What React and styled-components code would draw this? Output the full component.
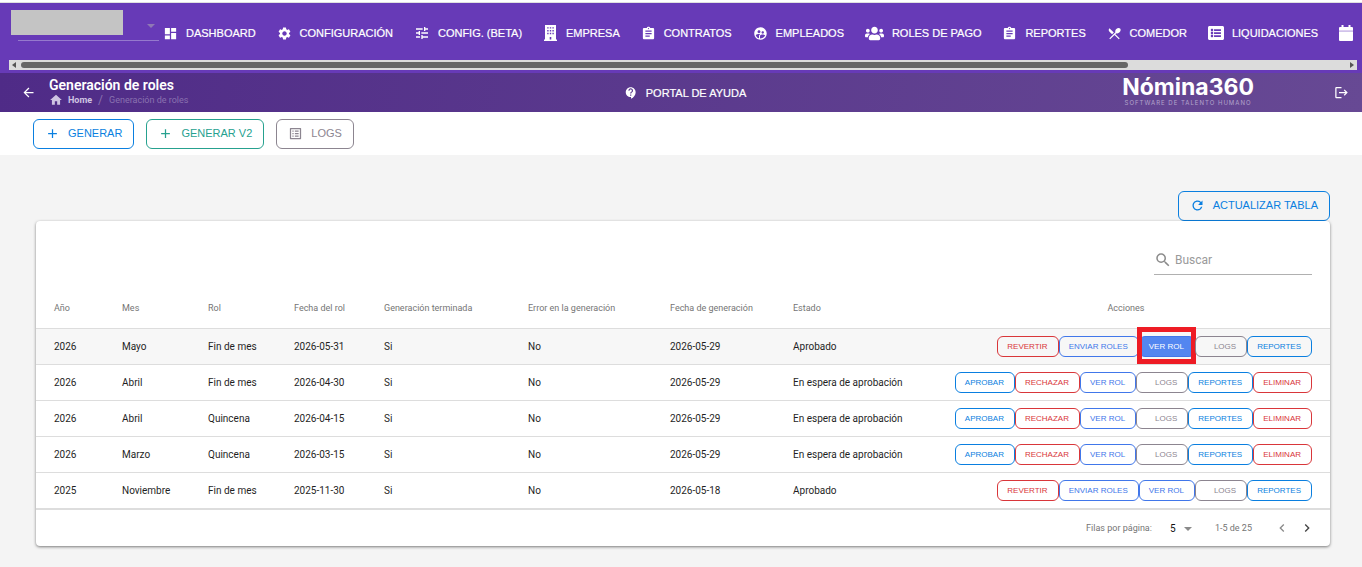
import styled, { createGlobalStyle } from "styled-components";
import {
  MdDashboard,
  MdSettings,
  MdTune,
  MdAssignment,
  MdSupervisedUserCircle,
  MdRestaurantMenu,
  MdContactSupport,
  MdLogout,
  MdArrowBack,
  MdHome,
  MdAdd,
  MdOutlineListAlt,
  MdRefresh,
  MdSearch,
  MdChevronLeft,
  MdChevronRight,
} from "react-icons/md";
import { FaUsers, FaListAlt } from "react-icons/fa";

const GlobalStyle = createGlobalStyle`
  * {
    box-sizing: border-box;
  }
  body {
    margin: 0;
    background: #f4f4f4;
    font-family: Roboto, "Liberation Sans", sans-serif;
  }
  button, input, select {
    font-family: inherit;
    margin: 0;
  }
`;

const Page = styled.div`
  border-top: 2px solid #fff;
  overflow: hidden;
`;

const TopBar = styled.header`
  height: 71px;
  background: #673ab7;
  border-top: 1px solid #e0e0e0;
  display: flex;
  flex-direction: column;
  justify-content: space-between;
  padding: 0 5px 3px 9px;
`;

const TopRow = styled.div`
  display: flex;
  align-items: flex-start;
  gap: 4px;
  padding-left: 9px;
  height: 57px;
`;

const Company = styled.div`
  position: relative;
  width: 141px;
  height: 38px;
  flex-shrink: 0;
  border-bottom: 1px solid #9579cd;
  &:before {
    content: "";
    position: absolute;
    left: -7px;
    top: 7px;
    width: 112px;
    height: 25px;
    background: #c4c4c4;
  }
  &:after {
    content: "";
    position: absolute;
    right: 4px;
    top: 21px;
    border: 4px solid transparent;
    border-top-color: #8f78b5;
    border-bottom: 0;
  }
`;

const CompanySelect = styled.select`
  appearance: none;
  width: 100%;
  height: 37px;
  border: 0;
  background: transparent;
  color: #fff;
`;

const Menu = styled.nav`
  flex: 1;
  display: flex;
  justify-content: space-between;
  align-items: center;
  height: 60px;
  padding-right: 4px;
`;

const MenuLink = styled.a`
  display: flex;
  align-items: center;
  gap: 8px;
  color: #fff;
  font-family: "Liberation Sans", Arial, sans-serif;
  font-size: 11px;
  white-space: nowrap;
  text-decoration: none;
  -webkit-text-stroke: 0.2px #fff;
`;

const ScrollTrack = styled.div`
  display: flex;
  align-items: center;
  justify-content: space-between;
  height: 10px;
  padding: 0 3px;
  background: #dcdcdc;
`;

const ScrollArrow = styled.span`
  border: 3px solid transparent;
  border-left: ${(props) => (props.$right ? "4px solid #555" : "0")};
  border-right: ${(props) => (props.$right ? "0" : "4px solid #555")};
`;

const ScrollThumb = styled.span`
  width: 82.5%;
  height: 6px;
  margin: 0 auto 0 5px;
  border-radius: 3px;
  background: #666;
`;

const SubBar = styled.div`
  display: grid;
  grid-template-columns: 1fr auto 1fr;
  align-items: center;
  height: 39px;
  padding: 0 13px 0 21px;
  color: #fff;
  background: linear-gradient(100deg, #4f2b87, #674994);
`;

const TitleArea = styled.div`
  display: flex;
  align-items: center;
  gap: 13px;
`;

const IconButton = styled.button`
  display: flex;
  padding: 0;
  border: 0;
  background: none;
  color: ${(props) => props.$color || "#fff"};
  cursor: pointer;
`;

const Title = styled.h1`
  margin: 0;
  font-size: 14px;
  line-height: 14px;
  font-weight: 600;
`;

const Crumbs = styled.nav`
  display: flex;
  align-items: center;
  gap: 6px;
  font-size: 9px;
  line-height: 16px;
  color: #8a72b0;
`;

const CrumbHome = styled.a`
  display: flex;
  align-items: center;
  gap: 5px;
  color: #cfc4e2;
  font-weight: 700;
  text-decoration: none;
`;

const Slash = styled.span`
  font-size: 12px;
`;

const BrandArea = styled.div`
  display: flex;
  justify-content: flex-end;
  align-items: center;
  gap: 80px;
`;

const Brand = styled.div`
  display: flex;
  flex-direction: column;
  align-items: center;
  padding-bottom: 3px;
  font-family: Inter, sans-serif;
`;

const BrandName = styled.span`
  font-size: 23px;
  line-height: 24px;
  font-weight: 700;
`;

const BrandText = styled.span`
  font-size: 6px;
  line-height: 8px;
  letter-spacing: 1px;
  color: #b3a4cc;
`;

const Toolbar = styled.div`
  display: flex;
  gap: 12px;
  padding: 7px 33px 6px;
  background: #fff;
`;

const OutlineButton = styled.button`
  display: flex;
  align-items: center;
  gap: 8px;
  height: 30px;
  padding: 0 11px 2px;
  border: 1px solid ${(props) => props.$color};
  border-radius: 6px;
  background: transparent;
  color: ${(props) => props.$color};
  font-family: "Liberation Sans", Arial, sans-serif;
  font-size: 11px;
  white-space: nowrap;
  cursor: pointer;
`;

const Content = styled.main`
  display: flex;
  flex-direction: column;
  align-items: flex-end;
  padding: 36px 32px 21px 36px;
`;

const Card = styled.section`
  width: 100%;
  background: #fff;
  border-radius: 4px;
  box-shadow: 0 1px 3px rgba(0, 0, 0, 0.5);
`;

const SearchRow = styled.div`
  display: flex;
  justify-content: flex-end;
  padding: 24px 18px 12px;
`;

const SearchBox = styled.label`
  display: flex;
  align-items: center;
  gap: 3px;
  width: 158px;
  height: 30px;
  border-bottom: 1px solid #b0b0b0;
  color: #8a8a8a;
`;

const SearchInput = styled.input`
  flex: 1;
  min-width: 0;
  padding: 0;
  border: 0;
  outline: 0;
  background: transparent;
  font-size: 12px;
  &::placeholder {
    color: #9a9a9a;
  }
`;

const Table = styled.table`
  width: 100%;
  table-layout: fixed;
  border-collapse: separate;
  border-spacing: 0;
  border-bottom: 1px solid #ddd;
`;

const Th = styled.th`
  width: ${(props) => (props.$width ? props.$width + "px" : "auto")};
  height: 42px;
  padding: 0 0 0 18px;
  border-bottom: 1px solid #ddd;
  color: #757575;
  font-size: 9px;
  font-weight: 400;
  text-align: left;
  white-space: nowrap;
  &:last-child {
    padding: 0;
    text-align: center;
  }
`;

const Row = styled.tr`
  background: ${(props) => (props.$active ? "#f7f7f7" : "#fff")};
`;

const Td = styled.td`
  height: 36px;
  padding: 0 0 0 18px;
  border-bottom: 1px solid #ddd;
  color: #1f1f1f;
  font-size: 10px;
  white-space: nowrap;
  &:last-child {
    padding: 0 18px 0 0;
  }
`;

const Actions = styled.div`
  display: flex;
  justify-content: flex-end;
`;

const ActionSlot = styled.span`
  position: relative;
  display: flex;
`;

const ActionButton = styled.button`
  height: 21px;
  padding: 0 10px 1px ${(props) => (props.$indent ? "18px" : "9px")};
  border: 1px solid ${(props) => props.$color};
  border-radius: 6px;
  background: ${(props) => (props.$filled ? "#5386f0" : "transparent")};
  color: ${(props) => (props.$filled ? "#fff" : props.$color)};
  font-family: "Liberation Sans", Arial, sans-serif;
  font-size: 8px;
  white-space: nowrap;
  cursor: pointer;
`;

const Highlight = styled.span`
  position: absolute;
  inset: -9px -1px -7px -2px;
  border: 5px solid #ee1c25;
  pointer-events: none;
`;

const Pager = styled.footer`
  display: flex;
  align-items: center;
  justify-content: flex-end;
  height: 36px;
  padding: 0 15px;
  color: #757575;
  font-size: 9px;
`;

const PageSize = styled.label`
  display: flex;
  align-items: center;
  gap: 18px;
  margin-right: 23px;
`;

const SizeWrap = styled.span`
  position: relative;
  display: flex;
  &:after {
    content: "";
    position: absolute;
    right: 0;
    top: 4px;
    border: 4px solid transparent;
    border-top-color: #8a8a8a;
    border-bottom: 0;
    pointer-events: none;
  }
`;

const SizeSelect = styled.select`
  appearance: none;
  width: 22px;
  padding: 0;
  border: 0;
  background: transparent;
  color: #111;
  font-size: 10px;
`;

const Arrows = styled.div`
  display: flex;
  gap: 9px;
  margin-left: 22px;
`;

const BuildingIcon = () => (
  <svg width="15" height="16" viewBox="0 0 15 16" fill="#fff">
    <path
      fillRule="evenodd"
      d="M2 0h11v14.500h1V16H1v-1.500h1zM4.200 2.200v1.400h1.400V2.200zM6.800 2.200v1.400h1.400V2.200zM9.400 2.200v1.400h1.400V2.200zM4.200 5v1.400h1.400V5zM6.800 5v1.400h1.400V5zM9.400 5v1.400h1.400V5zM4.200 7.800v1.400h1.400V7.800zM6.800 7.800v1.400h1.400V7.800zM9.400 7.800v1.400h1.400V7.800zM6.700 12v2.500h1.600V12z"
    />
  </svg>
);

const CalendarIcon = () => (
  <svg width="14" height="16" viewBox="0 0 14 16" fill="#fff">
    <path d="M2.500 0h2v2h5V0h2v2H13a1 1 0 0 1 1 1v2H0V3a1 1 0 0 1 1-1h1.500z" />
    <path d="M0 5h14v1.500H0z" fill="#ddd0f0" />
    <path d="M0 6.500h14V15a1 1 0 0 1-1 1H1a1 1 0 0 1-1-1z" />
  </svg>
);

const menu = [
  { label: "DASHBOARD", Icon: MdDashboard, size: 15 },
  { label: "CONFIGURACIÓN", Icon: MdSettings, size: 15 },
  { label: "CONFIG. (BETA)", Icon: MdTune, size: 16 },
  { label: "EMPRESA", Icon: BuildingIcon },
  { label: "CONTRATOS", Icon: MdAssignment, size: 15 },
  { label: "EMPLEADOS", Icon: MdSupervisedUserCircle, size: 15 },
  { label: "ROLES DE PAGO", Icon: FaUsers, size: 19 },
  { label: "REPORTES", Icon: MdAssignment, size: 15 },
  { label: "COMEDOR", Icon: MdRestaurantMenu, size: 15 },
  { label: "LIQUIDACIONES", Icon: FaListAlt, size: 16 },
];

const columns = [
  { label: "Año", width: 68 },
  { label: "Mes", width: 86 },
  { label: "Rol", width: 86 },
  { label: "Fecha del rol", width: 90 },
  { label: "Generación terminada", width: 144 },
  { label: "Error en la generación", width: 142 },
  { label: "Fecha de generación", width: 123 },
  { label: "Estado" },
  { label: "Acciones", width: 408 },
];

const rows = [
  ["2026", "Mayo", "Fin de mes", "2026-05-31", "Si", "No", "2026-05-29", "Aprobado"],
  ["2026", "Abril", "Fin de mes", "2026-04-30", "Si", "No", "2026-05-29", "En espera de aprobación"],
  ["2026", "Abril", "Quincena", "2026-04-15", "Si", "No", "2026-05-29", "En espera de aprobación"],
  ["2026", "Marzo", "Quincena", "2026-03-15", "Si", "No", "2026-05-29", "En espera de aprobación"],
  ["2025", "Noviembre", "Fin de mes", "2025-11-30", "Si", "No", "2026-05-18", "Aprobado"],
];

const colors = {
  APROBAR: "#0a7fe0",
  REPORTES: "#0a7fe0",
  RECHAZAR: "#d9363a",
  REVERTIR: "#d9363a",
  ELIMINAR: "#d9363a",
  "ENVIAR ROLES": "#4177ea",
  "VER ROL": "#4177ea",
  LOGS: "#8c8590",
};

const actionsFor = (status) =>
  status === "Aprobado"
    ? ["REVERTIR", "ENVIAR ROLES", "VER ROL", "LOGS", "REPORTES"]
    : ["APROBAR", "RECHAZAR", "VER ROL", "LOGS", "REPORTES", "ELIMINAR"];

const RoleRow = ({ row, active }) => (
  <Row $active={active}>
    {row.map((cell, i) => (
      <Td key={i}>{cell}</Td>
    ))}
    <Td>
      <Actions>
        {actionsFor(row[7]).map((name) => {
          const selected = active && name === "VER ROL";
          return (
            <ActionSlot key={name}>
              <ActionButton $color={colors[name]} $indent={name === "LOGS"} $filled={selected}>
                {name}
              </ActionButton>
              {selected && <Highlight />}
            </ActionSlot>
          );
        })}
      </Actions>
    </Td>
  </Row>
);

const App = () => {
  return (
    <Page>
      <GlobalStyle />
      <TopBar>
        <TopRow>
          <Company>
            <CompanySelect aria-label="Empresa" />
          </Company>
          <Menu>
            {menu.map(({ label, Icon, size }) => (
              <MenuLink href="#" key={label}>
                <Icon size={size} />
                {label}
              </MenuLink>
            ))}
            <MenuLink href="#" aria-label="Calendario">
              <CalendarIcon />
            </MenuLink>
          </Menu>
        </TopRow>
        <ScrollTrack>
          <ScrollArrow />
          <ScrollThumb />
          <ScrollArrow $right />
        </ScrollTrack>
      </TopBar>

      <SubBar>
        <TitleArea>
          <IconButton aria-label="Volver">
            <MdArrowBack size={15} />
          </IconButton>
          <div>
            <Title>Generación de roles</Title>
            <Crumbs>
              <CrumbHome href="#">
                <MdHome size={14} />
                Home
              </CrumbHome>
              <Slash>/</Slash>
              <span>Generación de roles</span>
            </Crumbs>
          </div>
        </TitleArea>
        <MenuLink href="#">
          <MdContactSupport size={14} />
          PORTAL DE AYUDA
        </MenuLink>
        <BrandArea>
          <Brand>
            <BrandName>Nómina360</BrandName>
            <BrandText>SOFTWARE DE TALENTO HUMANO</BrandText>
          </Brand>
          <IconButton aria-label="Salir">
            <MdLogout size={15} />
          </IconButton>
        </BrandArea>
      </SubBar>

      <Toolbar>
        <OutlineButton $color="#0a7fe0">
          <MdAdd size={15} />
          GENERAR
        </OutlineButton>
        <OutlineButton $color="#26a18f">
          <MdAdd size={15} />
          GENERAR V2
        </OutlineButton>
        <OutlineButton $color="#8c8590">
          <MdOutlineListAlt size={15} />
          LOGS
        </OutlineButton>
      </Toolbar>

      <Content>
        <OutlineButton $color="#0a7fe0">
          <MdRefresh size={15} />
          ACTUALIZAR TABLA
        </OutlineButton>
        <Card>
          <SearchRow>
            <SearchBox>
              <MdSearch size={18} />
              <SearchInput placeholder="Buscar" aria-label="Buscar" />
            </SearchBox>
          </SearchRow>
          <Table>
            <thead>
              <tr>
                {columns.map((col) => (
                  <Th key={col.label} $width={col.width}>
                    {col.label}
                  </Th>
                ))}
              </tr>
            </thead>
            <tbody>
              {rows.map((row, i) => (
                <RoleRow key={row[3]} row={row} active={i === 0} />
              ))}
            </tbody>
          </Table>
          <Pager>
            <PageSize>
              Filas por página:
              <SizeWrap>
                <SizeSelect defaultValue="5">
                  <option>5</option>
                  <option>10</option>
                </SizeSelect>
              </SizeWrap>
            </PageSize>
            <span>1-5 de 25</span>
            <Arrows>
              <IconButton aria-label="Anterior" $color="#8a8a8a">
                <MdChevronLeft size={16} />
              </IconButton>
              <IconButton aria-label="Siguiente" $color="#444">
                <MdChevronRight size={16} />
              </IconButton>
            </Arrows>
          </Pager>
        </Card>
      </Content>
    </Page>
  );
};

export default App;
